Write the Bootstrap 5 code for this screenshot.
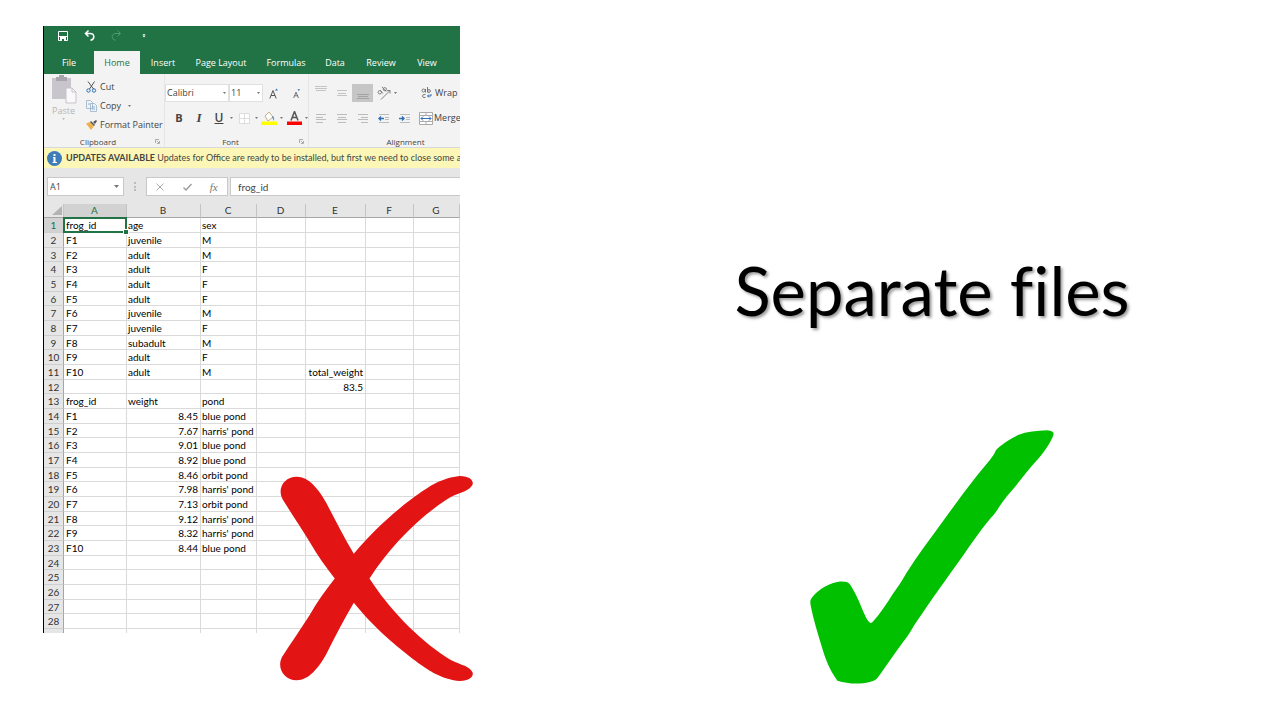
<!DOCTYPE html>
<html lang="en">
<head>
<meta charset="utf-8">
<meta name="viewport" content="width=device-width, initial-scale=1">
<title>Separate files</title>
<link href="https://cdn.jsdelivr.net/npm/bootstrap@5.3.0/dist/css/bootstrap.min.css" rel="stylesheet">
<style>
  :root { --xl-green: #217346; --ui: "Open Sans", "Noto Sans", sans-serif; --cell: Lato, "Liberation Sans", sans-serif; }
  body { background: #fff; color: #000; }
  .slide { padding: 26px 0 36px 43px; }
  .pane-bad { flex: 417 1 0; min-width: 0; }
  .pane-good { flex: 820 1 0; min-width: 0; }
  .verdict { padding: 214px 0 0 124px; }
  .excel { border-left: 1px solid #000; overflow: hidden; font: 9px/12px var(--ui); color: #444; }
  .excel button, .excel select, .excel input { font: inherit; color: inherit; border: 0; background: none; padding: 0; margin: 0; border-radius: 0; white-space: nowrap; }
  .excel svg { display: block; flex: none; }
  .titlebar { background: var(--xl-green); height: 25px; padding: 0 0 6px 5px; }
  .titlebar button { width: 27px; display: flex; justify-content: center; }
  .tabs { background: var(--xl-green); height: 23px; padding-left: 6px; }
  .tabs a { color: #fff; text-decoration: none; text-align: center; flex: none; line-height: 24px; height: 23px; }
  .tabs a.active { background: #f3f3f3; color: var(--xl-green); margin-left: 6px; }
  .w-s { width: 38px; } .w-m { width: 46px; } .w-r { width: 54px; } .w-l { width: 70px; } .w-xl { width: 60px; }
  .ribbon { background: #f3f3f3; height: 74px; border-bottom: 1px solid #d8d8d8; }
  .ribbon .group { position: relative; flex: none; }
  .ribbon .group + .group { border-left: 1px solid #e6e6e6; }
  .ribbon .title { height: 13px; line-height: 14px; text-align: center; font-size: 8px; padding-right: 12px; }
  .ribbon .title.last { padding-right: 0; }
  .ribbon .launcher { position: absolute; right: 4px; bottom: 3px; }
  .tools { height: 61px; }
  .excel .paste { width: 39px; color: #b5b5b5; gap: 1px; margin-right: 3px; }
  .cmds { padding-top: 3px; }
  .cmd { height: 19px; display: flex; align-items: center; gap: 3px; }
  .tool { width: 22px; height: 20px; display: flex; align-items: center; justify-content: center; flex: none; }
  .fontrow { height: 28px; display: flex; align-items: center; }
  .styles .tool { width: 20px; }
  .styles > svg { margin: 0 1px; }
  .aligns { padding-left: 1px; }
  .aligns .tool { width: 21px; }
  .excel .combo { height: 18px; background: #fff url("data:image/svg+xml,%3Csvg xmlns='http://www.w3.org/2000/svg' width='3' height='2'%3E%3Cpath d='M0 0h3L1.5 2z' fill='%23777'/%3E%3C/svg%3E") no-repeat right 2px center; border: 1px solid #e0e0e0; appearance: none; padding-left: 1px; }
  .message { background: #fcf7b6; height: 20px; white-space: nowrap; font: 9px/20px var(--cell); }
  .formula { background: #e6e6e6; height: 36px; padding: 1px 0 0 3px; font-size: 10px; }
  .box { background: #fff; border: 1px solid #c9c9c9; height: 19px; width: 82px; }
  .excel .namebox { width: 77px; height: 19px; border: 1px solid #c9c9c9; background-color: #fff; background-position: right 4px center; background-size: 5px 3px; padding-left: 2px; font-size: 9px; }
  .excel input.formula-input { background: #fff; border: 1px solid #c9c9c9; border-right: 0; height: 19px; margin-left: 2px; padding-left: 7px; min-width: 0; font-family: var(--cell); }
  .sheet { table-layout: fixed; width: 100%; border-collapse: separate; border-spacing: 0; font: 10px/13px var(--cell); color: #000; background: #fff; }
  .sheet th, .sheet td { padding: 0 2px 0 1px; height: 15px; border-right: 1px solid #dadada; border-bottom: 1px solid #dadada; white-space: nowrap; overflow: visible; font-weight: 400; }
  .sheet td:nth-child(2) { padding-left: 2px; }
  .sheet tbody tr:nth-child(3n) > * { height: 14px; line-height: 12px; }
  .sheet thead th { height: 14px; line-height: 13px; text-align: center; background: #e6e6e6; color: #333; border-right-color: #c4c4c4; border-bottom-color: #a5a5a5; }
  .sheet thead th:first-child { padding: 0 1px; }
  .sheet tbody th { background: #e6e6e6; color: #333; text-align: center; padding: 0; border-right-color: #a5a5a5; border-bottom-color: #cfcfcf; }
  .sheet th.picked { background: #d2d2d2; color: var(--xl-green); }
  .sheet td.num { text-align: right; }
  .sheet td.sel { position: relative; }
  .sheet td.sel::before { content: ""; position: absolute; inset: -1px; border: 2px solid var(--xl-green); }
  .sheet td.sel::after { content: ""; position: absolute; right: -2px; bottom: -2px; width: 4px; height: 4px; background: var(--xl-green); outline: 1px solid #fff; }
  .sheet tbody tr.cut > * { height: 4px; line-height: 0; border-bottom: 0; }
  .cross { position: absolute; right: -13px; bottom: -48px; }
  .headline { font: 67px/100px Lato, "Open Sans", sans-serif; font-variant-ligatures: none; text-shadow: 2px 2px 3px rgba(0,0,0,.4); margin: 0; white-space: nowrap; }
  .tick { margin-top: 90px; }
</style>
</head>
<body>
<main class="slide d-flex align-items-start">
  <section class="pane-bad position-relative">
    <div class="excel">
      <div class="titlebar d-flex align-items-center">
        <button class="btn" aria-label="Save"><svg width="10" height="10" viewBox="0 0 10 10"><path d="M.5.5h9v9h-9z" fill="none" stroke="#fff"/><path d="M1 5h8v1H1zM2 6h6v4H2z" fill="#fff"/><path d="M4 8h2v2H4z" fill="#217346"/></svg></button>
        <button class="btn" aria-label="Undo"><svg width="11" height="11" viewBox="0 0 11 11" fill="none" stroke="#fff" stroke-width="1.5"><path d="M4.500.5 1.500 3.500l3 3M1.500 3.500H6c5 0 5 6 .5 6.800"/></svg></button>
        <button class="btn" aria-label="Redo"><svg width="11" height="11" viewBox="0 0 11 11" fill="none" stroke="#4f9a70" stroke-width="1"><path d="m6.500.5 3 3-3 3M9.500 3.500H5c-5 0-5 6-.5 6.800"/></svg></button>
        <button class="btn" aria-label="Customize toolbar"><svg width="4" height="4" viewBox="0 0 5 5" fill="#fff"><path d="M1 0h3v1H1zM.5 2h4l-2 2.500z"/></svg></button>
      </div>
      <nav class="tabs d-flex" aria-label="Ribbon tabs">
        <a class="w-s" href="#">File</a><a class="w-m active" href="#">Home</a><a class="w-m" href="#">Insert</a><a class="w-l" href="#">Page Layout</a><a class="w-xl" href="#">Formulas</a><a class="w-s" href="#">Data</a><a class="w-r" href="#">Review</a><a class="w-s" href="#">View</a>
      </nav>
      <div class="ribbon d-flex">
        <div class="group" style="width:120px">
          <div class="tools d-flex">
            <button class="paste d-flex flex-column align-items-center">
              <svg width="26" height="30" viewBox="0 0 26 30"><path d="M1 4h19v21H1z" fill="#c9c5cc"/><path d="M5 3h3V1h5v2h3v4H5z" fill="#a9a5ad"/><path d="M15 14h6l4 4v11H15z" fill="#faf8fb" stroke="#c6c3c9"/><path d="M21 14v4h4" fill="none" stroke="#c6c3c9"/></svg>
              <span>Paste</span><svg width="3" height="2"><path d="M0 0h3L1.500 2z" fill="#bbb"/></svg>
            </button>
            <div class="cmds">
              <button class="cmd"><svg width="11" height="12" viewBox="0 0 11 12" fill="none"><path d="m2 .5 5.500 7.500M8.500.5 3.500 8" stroke="#555"/><circle cx="2.500" cy="9.500" r="1.700" stroke="#2f6fb5"/><circle cx="8" cy="9.500" r="1.700" stroke="#2f6fb5"/></svg>Cut</button>
              <button class="cmd"><svg width="11" height="12" viewBox="0 0 11 12" fill="#eef3f8" stroke="#9cb0c4" stroke-width=".8"><path d="M.5.500h4l2 2v6h-6zM4.500 3.500h4l2 2v6h-6z"/><path d="M6 7h3M6 9h3M2 4h2" stroke="#6fa5d8"/></svg>Copy<svg width="3" height="2" class="ms-1"><path d="M0 0h3L1.500 2z" fill="#777"/></svg></button>
              <button class="cmd"><svg width="11" height="10" viewBox="0 0 11 10"><path d="M0 3.500 4 2l4 4-3 4z" fill="#f0b04c"/><path d="m4 2 1-1 4 4-1 1z" fill="#555"/><path d="m7 2 3-2 1 1-2 3z" fill="#555"/></svg>Format Painter</button>
            </div>
          </div>
          <div class="title">Clipboard</div>
          <svg class="launcher" width="5" height="5" fill="none" stroke="#aaa"><path d="M.5 4V.5H4M2 2l2 2M4.500 2v2.500H2"/></svg>
        </div>
        <div class="group" style="width:144px">
          <div class="tools pt-1">
            <div class="fontrow mt-1" style="height:22px">
              <select class="combo" aria-label="Font" style="width:64px"><option>Calibri</option></select><select class="combo" aria-label="Font size" style="width:34px"><option>11</option></select>
              <button class="tool" aria-label="Grow font"><svg width="10" height="11" viewBox="0 0 10 11"><path d="M.8 10.500 4 2.500l3.200 8M2 7.500h4" fill="none" stroke="#555"/><path d="M6 2.500h3L7.500.5z" fill="#2f6fb5"/></svg></button>
              <button class="tool" aria-label="Shrink font"><svg width="9" height="11" viewBox="0 0 10 11"><path d="m1.800 10.500 2.700-6.500 2.700 6.500M2.800 8h3.400" fill="none" stroke="#666"/><path d="M6 .8h3L7.500 2.800z" fill="#2f6fb5"/></svg></button>
            </div>
            <div class="fontrow styles ps-1">
              <button class="tool fw-bold" style="font-size:11px">B</button><button class="tool" style="font:italic 700 13px 'Liberation Serif',serif">I</button><button class="tool text-decoration-underline fw-semibold" style="font-size:12px">U</button>
              <svg width="3" height="2"><path d="M0 0h3L1.500 2z" fill="#777"/></svg>
              <button class="tool" aria-label="Borders"><svg width="11" height="11" fill="#fff" stroke="#ddd"><path d="M.5.5h10v10H.5zM5.500.5v10M.5 5.500h10"/></svg></button>
              <svg width="3" height="2"><path d="M0 0h3L1.500 2z" fill="#777"/></svg>
              <button class="tool" aria-label="Fill colour"><svg width="16" height="14" viewBox="0 0 16 14"><path d="m4 5 4-4 4 5-5 4z" fill="#fff" stroke="#c3a474" stroke-width=".9"/><path d="M12 5q2 2 1 5-1-2-2-4z" fill="#4b8ac6"/><path d="M0 10.500h16V14H0z" fill="#ff0"/></svg></button>
              <svg width="3" height="2"><path d="M0 0h3L1.500 2z" fill="#777"/></svg>
              <button class="tool" aria-label="Font colour"><svg width="15" height="14" viewBox="0 0 15 14"><path d="m4 9.500 3.500-9 3.500 9M5.300 6.500h4.400" fill="none" stroke="#555" stroke-width="1.500"/><path d="M0 10.500h15V14H0z" fill="#f00"/></svg></button>
              <svg width="3" height="2"><path d="M0 0h3L1.500 2z" fill="#777"/></svg>
            </div>
          </div>
          <div class="title">Font</div>
          <svg class="launcher" width="5" height="5" fill="none" stroke="#aaa"><path d="M.5 4V.5H4M2 2l2 2M4.500 2v2.500H2"/></svg>
        </div>
        <div class="group" style="width:194px">
          <div class="tools pt-1">
            <div class="fontrow aligns mt-1" style="height:22px">
              <button class="tool" aria-label="Top align"><svg width="12" height="14" stroke="#c4c4c4"><path d="M0 .5h12M0 2.500h12M1 4.500h10"/></svg></button>
              <button class="tool" aria-label="Middle align"><svg width="10" height="8" stroke="#c4c4c4"><path d="M0 1.500h10M1 4.500h8M0 6.500h10"/></svg></button>
              <button class="tool" aria-label="Bottom align" style="background:#c6c6c6;height:18px"><svg width="12" height="14" stroke="#a2a2a2"><path d="M0 8.500h12M1 10.500h10M0 12.500h12"/></svg></button>
              <button class="tool" aria-label="Orientation"><svg width="14" height="14" viewBox="0 0 14 14" fill="none" stroke="#777" stroke-width=".9"><path d="M4 13.500 13 4.500M9.800 4.500H13v3"/><circle cx="2.800" cy="6.300" r="1.700"/><path d="M3 4l3 3.500M5 .8l4.200 4.800"/><circle cx="7.800" cy="3.200" r="1.600"/></svg></button>
              <svg width="3" height="2"><path d="M0 0h3L1.500 2z" fill="#777"/></svg>
              <button class="cmd ms-4"><svg width="11" height="12" viewBox="0 0 11 12" fill="none" stroke="#777"><circle cx="2.500" cy="3.500" r="1.500"/><path d="M4.500 2v3.500M6.500 0v5.500"/><circle cx="8" cy="4" r="1.400"/><path d="M4.500 7.500q-3-.5-3 1.500t3 1.500"/><path d="M10 7v2H6.500M8 7.500 6.500 9 8 10.500" stroke="#2f6fb5"/></svg>Wrap</button>
            </div>
            <div class="fontrow aligns">
              <button class="tool" aria-label="Align left"><svg width="10" height="9" stroke="#bcbcbc"><path d="M0 .5h10M0 3.500h7M0 5.500h10M0 8.500h7"/></svg></button>
              <button class="tool" aria-label="Center"><svg width="10" height="9" stroke="#bcbcbc"><path d="M0 .5h10M1 3.500h8M0 5.500h10M1 8.500h8"/></svg></button>
              <button class="tool" aria-label="Align right"><svg width="10" height="9" stroke="#bcbcbc"><path d="M0 .5h10M3 3.500h7M0 5.500h10M3 8.500h7"/></svg></button>
              <button class="tool" aria-label="Decrease indent"><svg width="11" height="9" stroke="#bcbcbc"><path d="M1 .5h10M7 3.500h4M7 5.500h4M1 8.500h10"/><path d="M6 4.500H1M3 2.500l-2 2 2 2" fill="none" stroke="#2f6fb5" stroke-width="1.400"/></svg></button>
              <button class="tool" aria-label="Increase indent"><svg width="11" height="9" stroke="#bcbcbc"><path d="M1 .5h10M7 3.500h4M7 5.500h4M1 8.500h10"/><path d="M0 4.500h5M3 2.500l2 2-2 2" fill="none" stroke="#2f6fb5" stroke-width="1.400"/></svg></button>
              <button class="cmd ms-1" style="gap:1px"><svg width="14" height="13" viewBox="0 0 14 13" fill="#fff" stroke="#aaa"><path d="M.5.5h13v12H.5zM.5 3.500h13M.5 9.500h13M7 .5v3M7 9.500v3"/><path d="M2 6.500h10M4 4.500l-2 2 2 2M10 4.500l2 2-2 2" fill="none" stroke="#2f6fb5"/></svg>Merge</button>
            </div>
          </div>
          <div class="title last">Alignment</div>
        </div>
      </div>
      <div class="message d-flex align-items-center">
        <svg width="15" height="15" viewBox="0 0 15 15" style="margin:0 4px 0 3px"><circle cx="7.500" cy="7.500" r="7.500" fill="#3f7cba"/><path d="M6.500 3h2v2h-2zM6 6h2.500v5H10v1H5.500v-1h1V7H6z" fill="#fff"/></svg>
        <span><b>UPDATES AVAILABLE</b> Updates for Office are ready to be installed, but first we need to close some a</span>
      </div>
      <div class="formula d-flex align-items-center">
        <select class="combo namebox" aria-label="Name box"><option>A1</option></select>
        <svg width="2" height="9" fill="#bbb" style="margin:0 10px"><path d="M0 0h2v2H0zM0 4h2v2H0zM0 7h2v2H0z"/></svg>
        <div class="box d-flex align-items-center">
          <button class="tool flex-fill" aria-label="Cancel"><svg width="8" height="8" stroke="#aaa"><path d="m.5.5 7 7M7.500.5l-7 7"/></svg></button>
          <button class="tool flex-fill" aria-label="Enter"><svg width="9" height="8" fill="none" stroke="#999" stroke-width="1.300"><path d="m.5 4.500 2.500 2.500 5.500-6"/></svg></button>
          <button class="tool flex-fill" style="font:italic 11px 'Liberation Serif',serif;color:#777" aria-label="Insert function">fx</button>
        </div>
        <input class="formula-input flex-fill" aria-label="Formula" value="frog_id">
      </div>
      <table class="sheet">
        <colgroup><col style="width:20px"><col style="width:63px"><col style="width:74px"><col style="width:56px"><col style="width:49px"><col style="width:60px"><col style="width:48px"><col></colgroup>
        <thead><tr><th><svg width="10" height="9" class="ms-auto"><path d="M10 0v9H0z" fill="#b3b3b3"/></svg></th><th class="picked">A</th><th>B</th><th>C</th><th>D</th><th>E</th><th>F</th><th>G</th></tr></thead>
        <tbody id="rows"></tbody>
      </table>
    </div>
    <svg class="cross" width="193" height="205" viewBox="30 34 578 614" aria-label="Wrong" role="img"><path fill="#e31414" d="M79 36C115 35 145 72 168 113 195 166 221 216 251 267 300 207 365 147 423 104 485 57 518 40 568 34 606 34 613 55 604 64 590 84 564 81 527 106 440 163 355 252 298 341 355 430 440 519 527 576 564 601 590 598 604 618 613 627 606 648 568 648 518 642 485 625 423 578 365 535 300 475 251 414 221 464 195 516 168 569 145 610 115 647 79 646 43 646 19 610 36 576 62 535 91 494 119 450 142 410 168 374 194 341 167 306 142 273 119 232 92 188 66 149 39 106 19 72 43 36 79 36Z"/></svg>
  </section>
  <section class="pane-good">
    <div class="verdict d-flex flex-column align-items-center">
      <h1 class="headline">Separate files</h1>
      <svg class="tick" width="244" height="254" viewBox="30 29 733 764" aria-label="Right" role="img"><path fill="#00c000" d="M592 86C615 66 635 55 655 44 682 34 712 31 742 30 758 31 764 37 762 43 753 69 732 97 714 118 683 151 662 182 636 212 606 246 599 262 584 282 550 319 519 366 487 411 441 475 393 542 352 603 337 625 333 636 322 650 289 693 265 731 234 773 227 782 222 784 209 787 177 795 141 792 112 783 86 747 76 717 65 681 52 636 41 603 32 559 29 544 30 540 38 530 59 506 89 489 120 485 139 485 144 487 150 494 172 527 184 565 198 593 207 609 211 612 217 607 242 581 260 551 280 520 301 491 308 479 320 458 355 403 393 353 431 301 463 257 496 212 532 166 548 145 567 126 583 102 586 96 586 92 592 86Z"/></svg>
    </div>
  </section>
</main>
<script src="https://cdn.jsdelivr.net/npm/bootstrap@5.3.0/dist/js/bootstrap.bundle.min.js"></script>
<script>
  const data = [
    ['frog_id','age','sex'],['F1','juvenile','M'],['F2','adult','M'],['F3','adult','F'],['F4','adult','F'],['F5','adult','F'],
    ['F6','juvenile','M'],['F7','juvenile','F'],['F8','subadult','M'],['F9','adult','F'],['F10','adult','M','','total_weight'],
    ['','','','','83.5'],['frog_id','weight','pond'],['F1','8.45','blue pond'],['F2','7.67',"harris' pond"],['F3','9.01','blue pond'],
    ['F4','8.92','blue pond'],['F5','8.46','orbit pond'],['F6','7.98',"harris' pond"],['F7','7.13','orbit pond'],['F8','9.12',"harris' pond"],
    ['F9','8.32',"harris' pond"],['F10','8.44','blue pond']
  ];
  const body = document.getElementById('rows');
  for (let r = 0; r < 29; r++) {
    const tr = body.insertRow();
    const th = document.createElement('th');
    th.textContent = r < 28 ? r + 1 : '';
    if (r === 0) th.className = 'picked';
    if (r === 28) tr.className = 'cut';
    tr.append(th);
    for (let c = 0; c < 7; c++) {
      const td = tr.insertCell(), v = (data[r] || [])[c] || '';
      td.textContent = v;
      if (/^[\d.]+$/.test(v) || v === 'total_weight') td.className = 'num';
      if (r === 0 && c === 0) td.className = 'sel';
    }
  }
</script>
</body>
</html>
